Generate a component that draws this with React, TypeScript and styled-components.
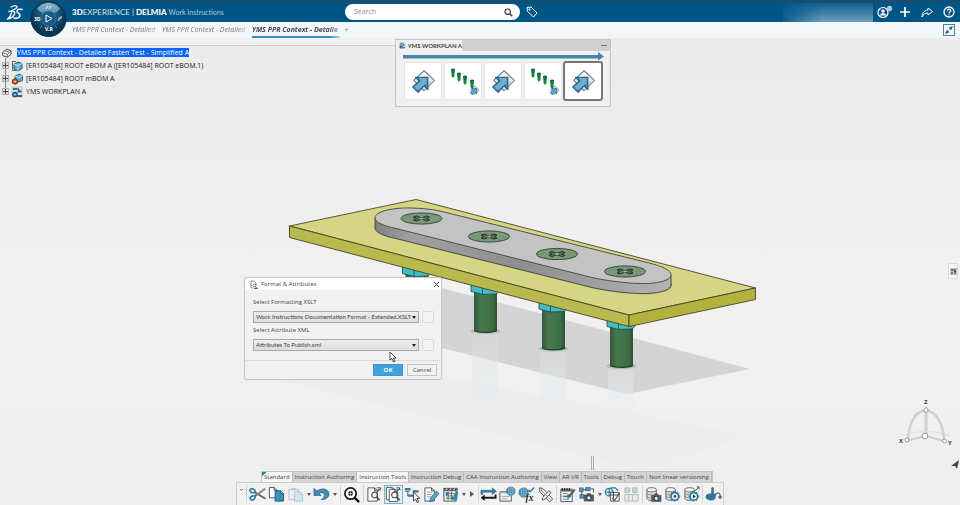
import React from 'react';
import styled, { createGlobalStyle, css } from 'styled-components';

const GlobalStyle = createGlobalStyle`
  * { box-sizing: border-box; }
  html, body, #root { height: 100%; }
  body {
    margin: 0;
    background: #eeeeee;
    color: #444;
    font-family: "Open Sans", "Noto Sans", sans-serif;
    font-size: 6px;
    line-height: 10px;
    overflow: hidden;
  }
  button, input, select { font: inherit; color: inherit; margin: 0; padding: 0; }
  svg { display: block; }
`;

const Page = styled.div`
  min-height: 100%;
  display: flex;
  flex-direction: column;
`;

/* ---------- top bar ---------- */

const TopBar = styled.header`
  position: relative;
  z-index: 2;
  height: 22px;
  display: grid;
  grid-template-columns: 345px minmax(0, 1fr) auto;
  align-items: center;
  background: #005587;
  border-top: 2px solid #1b4c69;
  color: #fff;
`;

const Brand = styled.div`
  display: flex;
  align-items: center;
  gap: 49px;
  padding-left: 6px;
`;

const BrandName = styled.h1`
  margin: 0;
  font-family: Lato, sans-serif;
  font-size: 8px;
  font-weight: 400;
  line-height: 14px;
  white-space: nowrap;
  color: #d5e6f0;
  b { font-weight: 900; color: #fff; }
  small { font-size: 7px; color: #a9cbe0; }
`;

const CompassButton = styled.button`
  position: absolute;
  left: 30px;
  top: -2px;
  width: 37px;
  height: 38px;
  border: 0;
  background: none;
`;

const SearchGroup = styled.form`
  display: flex;
  align-items: center;
  gap: 6px;
`;

const SearchField = styled.label`
  width: 175px;
  height: 16px;
  display: flex;
  align-items: center;
  padding: 0 7px 0 9px;
  border-radius: 8px;
  background: #fff;
  color: #333;
  input {
    flex: 1;
    min-width: 0;
    border: 0;
    outline: 0;
    background: none;
    font-size: 7px;
  }
  input::placeholder { color: #8d8d8d; }
`;

const TopActions = styled.div`
  display: flex;
  align-items: center;
`;

const UserName = styled.div`
  width: 90px;
  height: 19px;
  margin-right: 1px;
  background:
    linear-gradient(100deg, #07598a 0%, #07598a00 45%),
    linear-gradient(180deg, #155f8c 0%, #3d7ea6 50%, #6f9fbd 100%);
`;

const IconButton = styled.button<{ $w?: number }>`
  width: ${p => p.$w ?? 22}px;
  height: 18px;
  display: flex;
  align-items: center;
  justify-content: center;
  border: 0;
  background: none;
`;

/* ---------- document tabs ---------- */

const DocTabs = styled.nav`
  height: 16px;
  display: flex;
  align-items: stretch;
  padding: 0 5px 0 72px;
  background: #f4f7f9;
`;

const DocTab = styled.button<{ $active?: boolean }>`
  width: 86px;
  margin-right: 4px;
  border: 0;
  border-bottom: 2px solid transparent;
  background: none;
  font-size: 7px;
  font-style: italic;
  line-height: 13px;
  text-align: left;
  white-space: nowrap;
  overflow: hidden;
  color: #777;
  mask-image: linear-gradient(90deg, #000 88%, #0005);
  ${p => p.$active && css`
    width: 88px;
    font-weight: 700;
    color: #3f4a52;
    border-bottom-color: #3d8dc4;
  `}
`;

const AddTab = styled.button`
  border: 0;
  background: none;
  color: #999;
  font-size: 9px;
  line-height: 12px;
`;

const Collapse = styled.button`
  width: 12px;
  height: 12px;
  margin: 2px 0 0 auto;
  border: 1px solid #3e87ab;
  background: #eef5f9;
`;

/* ---------- workspace ---------- */

const Workspace = styled.main`
  position: relative;
  flex: 1;
  display: flex;
  flex-direction: column;
`;

const Scene = styled.svg`
  position: absolute;
  inset: 0;
  width: 100%;
  height: 100%;
`;

const TreeStrip = styled.div`
  position: relative;
  width: 396px;
  height: 8px;
  border-bottom: 1px solid #cfcfcf;
  background: #f0f1f2;
`;

const Tree = styled.ul`
  position: relative;
  align-self: flex-start;
  margin: 0;
  padding: 0 0 0 1px;
  list-style: none;
  font-size: 7px;
  color: #161616;
  &::before {
    content: "";
    position: absolute;
    left: 5px;
    top: 12px;
    bottom: 6px;
    border-left: 1px solid #888;
  }
`;

const TreeRow = styled.li<{ $root?: boolean }>`
  position: relative;
  height: 13px;
  display: flex;
  align-items: center;
  gap: ${p => (p.$root ? 5 : 1)}px;
  white-space: nowrap;
  mark { background: #0a63f5; color: #fff; line-height: 9px; }
  span { padding-left: 2px; }
`;

const Workplan = styled.section`
  position: absolute;
  left: 395px;
  top: 1px;
  width: 216px;
  border: 1px solid #c4c4c4;
  background: #f0f0f0;
`;

const WorkplanHead = styled.div`
  height: 11px;
  display: flex;
  justify-content: space-between;
  background: #d0d0d0;
`;

const WorkplanTitle = styled.h2`
  display: flex;
  align-items: center;
  gap: 2px;
  width: 66px;
  margin: 0;
  padding-left: 3px;
  background: #f0f0f0;
  font-family: Lato, sans-serif;
  font-size: 6px;
  font-weight: 700;
  white-space: nowrap;
`;

const Minimize = styled.button`
  width: 6px;
  height: 6px;
  margin-right: 3px;
  border: 0;
  border-bottom: 1px solid #777;
  background: none;
`;

const WorkplanArrow = styled.svg`
  width: 201px;
  height: 10px;
  margin: 0 7px 1px;
`;

const StepRow = styled.div`
  display: flex;
  gap: 2px;
  padding: 0 7px 6px 8px;
`;

const Step = styled.button<{ $active?: boolean }>`
  width: 38px;
  height: 38px;
  display: grid;
  place-items: center;
  border: 1px solid #e3e3e3;
  border-radius: 2px;
  background: #fff;
  ${p => p.$active && css`
    border-color: #777;
    box-shadow: 0 0 0 1px #777;
  `}
`;

/* ---------- dialog ---------- */

const Dialog = styled.section`
  position: absolute;
  left: 244px;
  top: 239px;
  width: 198px;
  border: 1px solid #c9c9c9;
  border-radius: 3px;
  background: #f1f1f1;
  box-shadow: 0 0 1px #bbb;
`;

const DialogHead = styled.div`
  height: 12px;
  display: flex;
  align-items: center;
  gap: 3px;
  padding: 0 1px 0 5px;
  border-radius: 3px 3px 0 0;
  background: #fff;
  h2 { flex: 1; margin: 0; font-size: 6px; font-weight: 400; }
`;

const DialogBody = styled.div`
  display: flex;
  flex-direction: column;
  padding: 6px 7px 8px 8px;
`;

const FieldLabel = styled.label`
  height: 14px;
  line-height: 12px;
`;

const FieldRow = styled.div`
  display: flex;
  align-items: center;
  gap: 3px;
  height: 14px;
`;

const SelectBox = styled.div`
  position: relative;
  flex: 1;
  select {
    width: 100%;
    height: 12px;
    padding: 0 0 0 2px;
    appearance: none;
    border: 1px solid #a9a9a9;
    border-radius: 0;
    background: linear-gradient(#eeeeee, #dedede);
    font-family: Lato, sans-serif;
    line-height: 10px;
  }
  svg { position: absolute; right: 3px; top: 5px; pointer-events: none; }
`;

const SmallBox = styled.button`
  width: 12px;
  height: 12px;
  border: 1px solid #d9d9d9;
  border-radius: 2px;
  background: #f4f4f4;
`;

const DialogFoot = styled.div`
  display: flex;
  justify-content: flex-end;
  gap: 4px;
  padding: 3px 4px 3px;
  border-top: 1px solid #dcdcdc;
`;

const DialogButton = styled.button<{ $primary?: boolean }>`
  width: 30px;
  height: 12px;
  border: 1px solid ${p => (p.$primary ? '#3696d4' : '#c6c6c6')};
  background: ${p => (p.$primary ? '#42a2da' : '#f3f3f3')};
  color: ${p => (p.$primary ? '#fff' : '#444')};
  font-weight: ${p => (p.$primary ? 700 : 400)};
`;

const Pointer = styled.svg`
  position: absolute;
  left: 389px;
  top: 313px;
`;

const SideHandle = styled.button`
  position: absolute;
  right: 2px;
  top: 225px;
  width: 10px;
  height: 16px;
  display: grid;
  place-items: center;
  border: 1px solid #dadada;
  background: #f7f7f7;
`;

/* ---------- action bar ---------- */

const ActionBar = styled.footer`
  position: relative;
  align-self: center;
  margin-top: auto;
  width: 488px;
`;

const SectionTabs = styled.div`
  display: flex;
  width: max-content;
  margin-left: 25px;
  border: 1px solid #c2c2c2;
  border-bottom: 0;
  background: #d3d3d3;
`;

const SectionTab = styled.button<{ $light?: boolean }>`
  height: 10px;
  padding: 0 2px;
  border: 0;
  border-right: 1px solid #bcbcbc;
  background: ${p => (p.$light ? '#f5f5f5' : 'transparent')};
  line-height: 10px;
  white-space: nowrap;
  &:first-child {
    background: linear-gradient(135deg, #2e7ea3 3px, #f5f5f5 3px);
  }
`;

const Tools = styled.div`
  display: flex;
  align-items: center;
  height: 23px;
  border: 1px solid #cccccc;
  border-bottom: 0;
  background: #f1f1f1;
`;

const Tool = styled.button<{ $on?: boolean; $faded?: boolean }>`
  flex: none;
  width: 19px;
  height: 19px;
  display: grid;
  place-items: center;
  border: 1px solid ${p => (p.$on ? '#7fb2d2' : 'transparent')};
  background: ${p => (p.$on ? '#e3eef5' : 'none')};
  opacity: ${p => (p.$faded ? 0.35 : 1)};
`;

const Caret = styled.button<{ $w: number }>`
  width: ${p => p.$w}px;
  height: 19px;
  display: grid;
  place-items: center;
  border: 0;
  background: none;
`;

const Separator = styled.i<{ $w: number }>`
  width: ${p => p.$w}px;
  height: 18px;
  background: linear-gradient(#d4d4d4, #d4d4d4) center / 1px 100% no-repeat;
`;

/* ---------- icon drawings, all on an 18 unit grid ---------- */

const BLUE = '#2e7ea3';
const DARK = '#4a5256';

type DocProps = { x?: number; y?: number; w?: number; h?: number; fill?: string; stroke?: string };

const Doc = ({ x = 2, y = 2, w = 9, h = 13, fill = '#fff', stroke = DARK }: DocProps) => (
  <path d={`M${x} ${y}h${w - 3}l3 3v${h - 3}h-${w}zM${x + w - 3} ${y}v3h3`} fill={fill} stroke={stroke} />
);
const Lens = ({ x = 10, y = 10, r = 3 }) => (
  <>
    <circle cx={x} cy={y} r={r} fill="#ffffffb0" stroke={DARK} strokeWidth="1.2" />
    <path d={`M${x + r - 1} ${y + r - 1}l3.5 3.5`} stroke={DARK} strokeWidth="1.8" />
  </>
);
const Globe = ({ x = 11, y = 6, r = 5 }) => (
  <>
    <circle cx={x} cy={y} r={r} fill={BLUE} stroke="#1e5876" strokeWidth=".6" />
    <path d={`M${x - r} ${y}h${2 * r}M${x} ${y - r}v${2 * r}M${x - r + 1} ${y - 2.4}h${2 * r - 2}M${x - r + 1} ${y + 2.4}h${2 * r - 2}`} stroke="#b7dbea" strokeWidth=".5" />
    <ellipse cx={x} cy={y} rx={r / 2} ry={r} stroke="#b7dbea" strokeWidth=".5" fill="none" />
  </>
);
const Database = () => (
  <>
    <path d="M2 4v9c0 3 10 3 10 0V4" fill="#dcdcdc" stroke="#666" />
    <ellipse cx="7" cy="4" rx="5" ry="2.2" fill="#f5f5f5" stroke="#666" />
    <path d="M2 7.5c0 2.6 10 2.6 10 0M2 10.5c0 2.6 10 2.6 10 0" stroke="#777" fill="none" strokeWidth=".8" />
  </>
);
const Camera = ({ x = 7, y = 9 }) => (
  <g transform={`translate(${x} ${y})`}>
    <path d="M0 1.5h2.5L3.5 0h3l1 1.5H10V8H0z" fill="#5a5e61" stroke="#3b3f41" strokeWidth=".6" />
    <circle cx="5" cy="4.6" r="2.3" fill="#e6eef2" stroke="#20282c" />
  </g>
);
const Gear = ({ x = 12, y = 11, r = 4 }) => (
  <>
    <circle cx={x} cy={y} r={r} fill="#eef6fa" stroke={BLUE} strokeWidth="1.8" />
    <circle cx={x} cy={y} r={r + 1.2} fill="none" stroke={BLUE} strokeWidth="1" strokeDasharray="1.8 2" />
  </>
);

const icons: Record<string, React.ReactNode> = {
  cut: (
    <>
      <path d="M17 3L6 10.5M17.5 13.5L6 6.5" stroke="#5c686e" strokeWidth="2" />
      <path d="M8 8.7l8.5-5.5" stroke="#c6d2d8" strokeWidth=".7" />
      <ellipse cx="3.6" cy="5" rx="2.7" ry="2" stroke={BLUE} strokeWidth="1.8" transform="rotate(25 3.6 5)" />
      <ellipse cx="3.8" cy="12.5" rx="2.7" ry="2" stroke={BLUE} strokeWidth="1.8" transform="rotate(-30 3.8 12.5)" />
    </>
  ),
  copy: (<><Doc x={1.5} y={1.5} w={8} h={11} /><Doc x={7.5} y={5} w={9} h={11} fill="#3a8fb7" stroke="#1e5f80" /></>),
  paste: (
    <g opacity=".55">
      <path d="M2 3.5h10v11H2z" fill="#e6e6e6" stroke="#999" /><path d="M5 2h4v2.5H5z" fill="#999" />
      <Doc x={8} y={6} w={8.5} h={10} fill="#bfe0ec" stroke="#6fa6bf" />
    </g>
  ),
  undo: (
    <path d="M1 2.5V10h7.500L6.500 7.800C9.500 6 12.500 7.800 12 10.500c-.4 1.700-1.700 3-3.500 4C13.500 14.500 17 12 17 8.500 17 3.500 10 1 4 5.300z" fill="#3d8db5" stroke="#1d5b7b" strokeWidth=".7" />
  ),
  zoom: (
    <>
      <circle cx="8" cy="8" r="6" fill="#fff" stroke="#15191b" strokeWidth="1.8" />
      <circle cx="8" cy="8" r="2.600" fill="#15191b" /><path d="M12.5 12.5l4.5 4.5" stroke="#15191b" strokeWidth="2.6" />
      <path d="M8 5.5v5M5.500 8h5" stroke="#fff" strokeWidth=".6" />
    </>
  ),
  docSearch: (<><Doc x={2} y={2} w={10} h={14} /><Lens x={9} y={9.5} /><path d="M12 6l4-4M11.5 2H16M12 4h4" stroke={DARK} /></>),
  docsSearch: (<><Doc x={1.5} y={1.5} w={9} h={13} /><Doc x={4.5} y={3.5} w={9} h={13} /><Lens x={10} y={9.5} /><path d="M12 6l4-4M12 2h4M12.5 4h4" stroke={DARK} /></>),
  flow: (
    <>
      <path d="M1 5.5h5M9 5.5h5M4 5.5v5h3" stroke={DARK} />
      <path d="M1 2h6v2.500H1zM9.500 4.500h6V7h-6zM4.500 9h5v2.500h-5z" fill={BLUE} />
      <path d="M10 6.5V16l2.3-2.2 1.7 3.7 1.5-.7-1.7-3.6H17z" fill="#fff" stroke="#22282b" strokeWidth=".9" />
    </>
  ),
  edit: (
    <>
      <Doc x={2} y={2} w={10} h={14} /><path d="M4 6.5h6M4 9h5M4 11.5h4" stroke="#777" strokeWidth=".8" />
      <path d="M8 12.5l6-7 3 2.5-6 7-4 1.500z" fill="#59a5c8" stroke="#2a6685" strokeWidth=".8" />
    </>
  ),
  clapper: (
    <>
      <path d="M2 5h13v11H2z" fill="#f1f1f1" stroke={DARK} /><path d="M1.5 2h15v3h-15z" fill="#555" />
      <path d="M4 4.5l1.5-2M8 4.5l1.5-2M12 4.5l1.5-2" stroke="#fff" />
      <path d="M4 8h9M4 10.5h9M4 13h9M6.5 6v9M10 6v9" stroke={DARK} strokeWidth=".8" />
      <path d="M4 6.5h3V10H4zM10 11h3v3.5h-3z" fill={BLUE} /><path d="M13 8l4-3-1 9-3 2z" fill={BLUE} />
    </>
  ),
  swap: (
    <>
      <path d="M1 4.5h12V2l4.5 3.5L13 9V6.5H3V9H1z" fill="#3286ad" stroke="#174f6b" strokeWidth=".5" />
      <path d="M17.5 13.5H5V16L.7 12.5 5 9v2.500h10.500V9h2z" fill="#161b1e" />
    </>
  ),
  globeDoc: (
    <>
      <path d="M1 6h12v10H1z" fill="#f8f8f8" stroke={DARK} /><path d="M1 6h12v2H1z" fill="#9bbccb" />
      <path d="M3 11h8M3 13.5h6" stroke="#888" strokeWidth=".8" /><Globe x={12.5} y={5.5} r={4.5} />
    </>
  ),
  globeFx: (
    <>
      <Globe x={6} y={7} r={5} /><path d="M11 4l2 2 4-4.5" stroke={BLUE} strokeWidth="1.5" />
      <text x="8" y="16" fontFamily="Liberation Serif, serif" fontStyle="italic" fontWeight="700" fontSize="10" fill="#1a1e20">fx</text>
    </>
  ),
  tag: (
    <>
      <path d="M2.5 2L6 2.5l10.500 11-3 3.5L3 6z" fill="#f5f5f5" stroke={DARK} strokeLinejoin="round" />
      <path d="M6 12l6.5-7L15 7l-6.5 7-3 1z" fill="#e2e6e8" stroke={DARK} strokeWidth=".9" />
      <path d="M5 5l9 9.5" stroke="#8a8f92" /><circle cx="5" cy="4.5" r=".8" fill={DARK} />
    </>
  ),
  notebook: (
    <>
      <path d="M2 3.5h12v13H2z" fill="#fff" stroke={DARK} /><path d="M2 3h12v3H2z" fill="#777" />
      <path d="M3.5 2v3M6 2v3M8.500 2v3M11 2v3" stroke="#222" strokeWidth="1.1" />
      <path d="M4 8h5M4 14h7" stroke="#777" /><path d="M4 10h5V8l4 3-4 3v-2H4z" fill={BLUE} /><path d="M10 10l6-7 1.5 1.500L12 11z" fill="#555" />
    </>
  ),
  camera: (
    <>
      <path d="M1.5 2h4v4h-4zM8 1.5h5V5H8zM2 9h4v4H2z" fill="#4a98bd" stroke="#23607e" strokeWidth=".7" />
      <path d="M5.5 4H8M4 6v3M14 3h2.5v4" stroke={DARK} /><Camera x={6.5} y={8} />
    </>
  ),
  shape: (
    <>
      <circle cx="5.5" cy="6.5" r="4" fill="#fff" stroke={BLUE} strokeWidth="1.5" />
      <path d="M7 2h5l3 3M2 6.5h7M5.5 2.5v8" stroke={BLUE} strokeWidth="1.3" />
      <path d="M7 7h9v9H7z" fill="#fff" stroke={DARK} /><path d="M7 9.5h9M10 7v9M8.5 12.5l3 2.5 5-8" stroke={DARK} strokeWidth="1.1" />
    </>
  ),
  board: (<><path d="M2 2h5v5H2zM10 2h5v5h-5z" fill="#69a6c2" stroke={DARK} /><path d="M2 9h14v7H2zM6 9v7M10 9v7" fill="#ddd" stroke={DARK} /></>),
  dbCamera: (<><Database /><Camera x={7} y={8.5} /></>),
  dbGear: (<><Database /><Gear x={11.5} y={11} /><circle cx="11.5" cy="11" r="1.5" fill={DARK} /></>),
  dbPlay: (<><Database /><Gear x={11.5} y={11} /><path d="M10.5 9l3 2-3 2z" fill="#222" /><path d="M13 5l4-4M14.5 1H17v2.500" stroke={DARK} /></>),
  hand: (
    <>
      <path d="M7 2.5v6C5 8 1 8.5 1 11.5 1 14 4 15 6.5 15c3 0 4.500-1 4.500-3.500V8.5H9v-6c0-1.300-2-1.300-2 0z" fill="#2f7599" stroke="#235f7d" strokeWidth=".6" />
      <path d="M11 10c.5-3.500 5-3.500 5 0v2M14 11l2 2 1.500-2" stroke={DARK} strokeWidth="1.2" />
    </>
  ),
};

const Icon = ({ name, size = 17 }: { name: string; size?: number }) => (
  <svg width={size} height={size} viewBox="0 0 18 18" fill="none" aria-hidden="true">{icons[name]}</svg>
);

const Down = ({ color = '#555' }) => (
  <svg width="4" height="3" viewBox="0 0 4 3" aria-hidden="true"><path d="M0 0h4L2 3z" fill={color} /></svg>
);

/* ---------- scene ---------- */

const SLOT = 'M375 218C375 211 394 207.500 411 208C421 208.300 430 209 440 211L645 262C662 266 671 270 671 275C671 281 655 284 640 283.500C626 283.200 608 281 592 277.500L396 228.500C384 226 375 222.500 375 218Z';

const Screw = ({ x, y }: { x: number; y: number }) => (
  <g transform={`translate(${x} ${y})`}>
    <ellipse rx="20.5" ry="5.6" fill="#7a977a" stroke="#2c442f" strokeWidth=".9" />
    <path d="M-8-1.500l3-1 4 1.500h2l4-1.500 3 1-3 1.500 3 1.500-3 1-4-1.500h-2l-4 1.500-3-1 3-1.500z" fill="#56745a" stroke="#1d2c20" strokeWidth=".9" />
    <ellipse rx="2" ry="1" fill="#a3b8a3" />
  </g>
);

const Bolt = ({ x, y }: { x: number; y: number }) => (
  <g transform={`translate(${x} ${y})`}>
    <ellipse cy="40" rx="15" ry="3" fill="#9a9a9a" opacity=".5" />
    <path d="M-11.500 0h23v39.500c-3 2.500-20 2.500-23 0z" fill="url(#bolt)" />
    <path d="M-11.500 39.500c3 2.500 20 2.500 23 0" stroke="#122b17" fill="none" />
    <path d="M-14.500-10V.5L-3 3.500l14-.5 3-4v-9z" fill="#43bcc2" stroke="#14474b" strokeWidth=".8" />
    <path d="M-3-6v9.500" stroke="#14474b" strokeWidth=".8" />
  </g>
);

const AxisTriad = () => (
  <g>
    <g fill="none" stroke="#cfcfcf" strokeLinecap="round">
      <path d="M908 439c2-38 33-38 36 0" strokeWidth="2.5" />
      <path d="M926 435v-23" strokeWidth="3" />
      <path d="M926 436l-17 4M926 436l18 5" strokeWidth="2" />
      <path d="M902 436c14-6 34-6 47 0" strokeWidth="1" stroke="#dedede" />
    </g>
    <g fill="#fff" stroke="#999">
      <circle cx="925" cy="436" r="2.8" /><circle cx="907" cy="440" r="2" /><circle cx="944.5" cy="441" r="2" /><path d="M926 407l2.500 4-2.500 1.500-2.500-1.500z" />
    </g>
    <g fontFamily="Noto Sans, sans-serif" fontWeight="700" fontSize="6" fill="#444">
      <text x="924" y="404">Z</text><text x="899" y="443">X</text><text x="948" y="445">Y</text>
    </g>
    <path d="M951 466l8-6-2 9-2-3z" fill="#444" />
  </g>
);

const Model = () => (
  <Scene viewBox="0 38 960 467" preserveAspectRatio="xMidYMid slice" role="img" aria-label="Plate assembly">
    <defs>
      <linearGradient id="bolt"><stop offset="0" stopColor="#35593b" /><stop offset=".3" stopColor="#457a4d" /><stop offset=".8" stopColor="#3e6d46" /><stop offset="1" stopColor="#2d5034" /></linearGradient>
      <linearGradient id="side"><stop offset="0" stopColor="#808080" /><stop offset=".12" stopColor="#a0a0a0" /><stop offset=".5" stopColor="#8e8e8e" /><stop offset=".8" stopColor="#a4a4a4" /><stop offset="1" stopColor="#b4b4b4" /></linearGradient>
      <linearGradient id="floor" x2="0" y2="1"><stop offset="0" stopColor="#ebebeb" /><stop offset=".6" stopColor="#f1f1f1" /><stop offset="1" stopColor="#eeeeee" /></linearGradient>
      <linearGradient id="fade" x2="0" y2="1"><stop offset="0" stopColor="#dcdcdc" stopOpacity=".3" /><stop offset=".6" stopColor="#e6ebee" stopOpacity=".5" /><stop offset="1" stopColor="#eee" stopOpacity="0" /></linearGradient>
    </defs>
    <path d="M0 38h960v467H0z" fill="url(#floor)" />
    <path d="M282 380L440 376 750 436 640 470z" fill="#ededed" />
    <path d="M430 285L520 308 750 369 627 394 430 345z" fill="#d4d4d4" />
    <path d="M608 370h26v68h-26zM540 352h26v66h-26zM472 335h26v66h-26z" fill="url(#fade)" />
    <Bolt x={417} y={273} /><Bolt x={485.5} y={291} /><Bolt x={553.5} y={308.5} /><Bolt x={621.5} y={326} />
    <g stroke="#46462a" strokeWidth=".9" strokeLinejoin="round">
      <path d="M289.500 226L416 199.500 755.500 288 629 315z" fill="#d5d585" />
      <path d="M289.500 226L629 315v11.500L289.500 237.500z" fill="#b9b94d" />
      <path d="M629 315l126.500-27v11.500L629 326.500z" fill="#b3b23c" />
    </g>
    <g transform="translate(1 11)"><path d={SLOT} fill="#9b9b63" opacity=".5" /></g>
    <g stroke="#444" strokeWidth=".9">
      <g transform="translate(0 10)"><path d={SLOT} fill="url(#side)" /></g>
      <path d="M375 218v10l21 10 276 46-1-9z" fill="url(#side)" stroke="none" />
      <path d="M375 218v10M671 275v10" />
      <path d={SLOT} fill="#c3c3c3" />
    </g>
    <Screw x={421.5} y={218.5} /><Screw x={489} y={236.5} /><Screw x={557} y={254} /><Screw x={625} y={271.5} />
    <path d="M591.500 456v14M593.500 456v14" stroke="#999" strokeWidth=".8" />
    <AxisTriad />
  </Scene>
);

const ArrowTile = ({ size = 26 }) => (
  <svg width={size} height={size} viewBox="0 0 24 24" fill="none" aria-hidden="true">
    <path d="M13 2.500l9.500 9L13 21l-9.500-9.500z" fill="#f1f2f3" stroke="#6a7075" strokeLinejoin="round" />
    <path d="M13 12l9-.5L13 21z" fill="#d5d9dc" />
    <path d="M5 8.500h11.500v11.500l-3.500-3.500-5.500 6-5-5 6-5.500z" fill="#4590bb" stroke="#235b7e" strokeLinejoin="round" />
    <path d="M8 9.500h7.500v4L7 20.500l-3-3 6.500-5.500z" fill="#8cc2df" opacity=".6" />
  </svg>
);

const FastenTile = () => (
  <svg width="34" height="32" viewBox="0 0 34 32" fill="none" aria-hidden="true">
    {[[7, 5], [13, 9], [19, 12], [26, 16]].map(([x, y]) => (
      <g key={x}>
        <ellipse cx={x} cy={y} rx="2.2" ry="1.5" fill="#07622b" /><path d={`M${x - 1.5} ${y}h3v6l-1.5 2-1.5-2z`} fill="#128a3d" />
        <path d={`M${x - 1.5} ${y + 2}h3`} stroke="#154776" strokeWidth="1.2" />
      </g>
    ))}
    <g transform="translate(23 20) scale(.45)">
      <path d="M13 2.500l9.500 9L13 21l-9.500-9.500z" fill="#f1f2f3" stroke="#555b60" strokeWidth="1.5" />
      <path d="M6 8h11v11l-3.500-3-6 6-5-5 6-6z" fill="#5ba5ce" stroke="#235b7e" strokeWidth="1.5" />
    </g>
  </svg>
);

const Expander = () => (
  <svg width="9" height="9" viewBox="0 0 9 9" aria-hidden="true"><path d="M1.500 1.500h6v6h-6z" fill="#e0e0e0" stroke="#aaa" /><path d="M2 4.500h5M4.500 2v5" stroke="#444" /></svg>
);

const treeIcons: Record<string, React.ReactNode> = {
  root: (<><path d="M1.500 6L6 2.500l5 1.500v4L7 11 2 9.500z" fill="#f3f3f3" stroke="#444" /><path d="M2 6.500L7 8l4-3.500M7 8v3M4 4l4.500 1.500" stroke="#555" strokeWidth=".8" /></>),
  ebom: (<><path d="M1 1h4v1H2v8h3v1H1z" fill="#666" /><path d="M3 4l4-2 4 1.500v5L7 11 3 9z" fill="#5aabd0" stroke="#1d5673" /><path d="M3 4l4 1.500 4-2M7 5.500V11" stroke="#d8f1fa" strokeWidth=".8" /></>),
  mbom: (<><path d="M4 3l4-2 3.500 1.500v5L8 9 4 8z" fill="#5aabd0" stroke="#1d5673" strokeWidth=".8" /><path d="M4 3l4 1.500 3.500-2" stroke="#d8f1fa" /><circle cx="4" cy="8.5" r="2.7" fill="#c96122" stroke="#773000" /><circle cx="4" cy="8.5" r=".8" fill="#fff" /></>),
  plan: (<><path d="M1 1h10v10H1z" fill="#dce8ef" stroke="#95a5ae" strokeWidth=".6" /><path d="M2 2h4v2H2zM6.500 4.500h4v2h-4zM6 9h5v2H6z" fill="#2a6e95" /><path d="M6 3h2v2" stroke="#333" fill="none" /><circle cx="4" cy="8.5" r="2.4" fill="#2b82b3" stroke="#124766" /><circle cx="4" cy="8.5" r=".7" fill="#fff" /></>),
};
const TreeIcon = ({ name, size = 12 }: { name: string; size?: number }) => (
  <svg width={size} height={size} viewBox="0 0 12 12" fill="none" aria-hidden="true">{treeIcons[name]}</svg>
);

const nodes = [
  { icon: 'ebom', text: '[ER105484] ROOT eBOM A ([ER105484] ROOT eBOM.1)' },
  { icon: 'mbom', text: '[ER105484] ROOT mBOM A' },
  { icon: 'plan', text: 'YMS WORKPLAN A' },
];

const sections = ['Standard', 'Instruction Authoring', 'Instruction Tools', 'Instruction Debug', 'CAA Instruction Authoring', 'View', 'AR-VR', 'Tools', 'Debug', 'Touch', 'Non linear versioning'];

/* Strings name a tool; "v" is a menu caret, ">" an overflow arrow, a number a divider of that width. */
const toolRow: (string | number)[] = [
  'cut', 'copy', 'paste', 'v', 'undo', 'v', 4, 'zoom', 4, 'docSearch', 'docsSearch', 'flow', 'edit', 'clapper', 'v', '>', 2,
  'swap', 'globeDoc', 'globeFx', 'tag', 3, 'notebook', 'camera', 'v', 'shape', 'board', 3, 'dbCamera', 'dbGear', 'dbPlay', 3, 'hand',
];

const Toolbar = () => (
  <ActionBar>
    <SectionTabs role="tablist">
      {sections.map(s => (
        <SectionTab key={s} role="tab" $light={s === 'Instruction Tools'}>{s}</SectionTab>
      ))}
    </SectionTabs>
    <Tools>
      <Caret $w={8} aria-label="Collapse"><svg width="5" height="14" viewBox="0 0 5 14"><path d="M1 2l1.500 1.500L4 2" stroke="#555" fill="none" strokeWidth=".8" /></svg></Caret>
      <Separator $w={3} />
      {toolRow.map((t, i) => {
        if (typeof t === 'number') return <Separator key={i} $w={t} />;
        if (t === 'v') return <Caret key={i} $w={7} aria-label="More"><Down /></Caret>;
        if (t === '>') return <Caret key={i} $w={10} aria-label="Next"><svg width="4" height="6" viewBox="0 0 4 6"><path d="M0 0l4 3-4 3z" fill="#555" /></svg></Caret>;
        return <Tool key={i} aria-label={t} $on={t === 'docsSearch'} $faded={t === 'board'}><Icon name={t} /></Tool>;
      })}
    </Tools>
  </ActionBar>
);

const FormatDialog = () => (
  <Dialog role="dialog" aria-labelledby="format-title">
    <DialogHead>
      <svg width="8" height="9" viewBox="0 0 8 9" fill="none"><path d="M1 1h3l2 2v2M1 1v7h2" stroke="#777" strokeWidth=".8" /><circle cx="4.5" cy="5.5" r="1.5" stroke="#555" strokeWidth=".8" /><path d="M5.500 7l2 1.500H4" stroke="#555" /></svg>
      <h2 id="format-title">Format &amp; Attributes</h2>
      <IconButton $w={8} aria-label="Close"><svg width="5" height="5" viewBox="0 0 5 5"><path d="M0 0l5 5M5 0L0 5" stroke="#444" /></svg></IconButton>
    </DialogHead>
    <DialogBody>
      <FieldLabel htmlFor="xslt">Select Formatting XSLT</FieldLabel>
      <FieldRow>
        <SelectBox><select id="xslt"><option>Work Instructions Documentation Format - Extended.XSLT</option></select><Down color="#222" /></SelectBox>
        <SmallBox aria-label="Browse XSLT" />
      </FieldRow>
      <FieldLabel htmlFor="xml">Select Attribute XML</FieldLabel>
      <FieldRow>
        <SelectBox><select id="xml"><option>Attributes To Publish.xml</option></select><Down color="#222" /></SelectBox>
        <SmallBox aria-label="Browse XML" />
      </FieldRow>
    </DialogBody>
    <DialogFoot>
      <DialogButton $primary>OK</DialogButton>
      <DialogButton>Cancel</DialogButton>
    </DialogFoot>
  </Dialog>
);

const WorkplanPanel = () => (
  <Workplan>
    <WorkplanHead>
      <WorkplanTitle><TreeIcon name="plan" size={7} />YMS WORKPLAN A</WorkplanTitle>
      <Minimize aria-label="Minimize" />
    </WorkplanHead>
    <WorkplanArrow viewBox="0 0 201 10"><path d="M0 4h195V1l6 4.500-6 4V7.500H0z" fill="#4685a4" /></WorkplanArrow>
    <StepRow>
      {[0, 1, 2, 3, 4].map(i => (
        <Step key={i} $active={i === 4} aria-label={`Step ${i + 1}`}>{i % 2 ? <FastenTile /> : <ArrowTile />}</Step>
      ))}
    </StepRow>
  </Workplan>
);

const Compass = () => (
  <CompassButton aria-label="Compass">
    <svg width="37" height="38" viewBox="0 0 37 38">
      <defs>
        <radialGradient id="dial" cy=".35"><stop offset="0" stopColor="#2c7299" /><stop offset=".7" stopColor="#0f4c72" /><stop offset="1" stopColor="#0a3553" /></radialGradient>
        <linearGradient id="gloss" x2="0" y2="1"><stop offset="0" stopColor="#b5cfde" /><stop offset="1" stopColor="#4883a5" /></linearGradient>
      </defs>
      <circle cx="18.5" cy="19" r="17.5" fill="url(#dial)" stroke="#09304b" />
      <path d="M18.500 18L7 9c5-8 18-8 23 0z" fill="url(#gloss)" opacity=".8" />
      <circle cx="18.5" cy="18.5" r="7.5" fill="#195b83" stroke="#3e7da1" strokeWidth=".6" />
      <path d="M16 15l6 3.500-6 3.500z" fill="none" stroke="#fff" />
      <path d="M10 28l2-2M27 28l-2-2M9 10l2 2M28 10l-2 2" stroke="#7caac3" strokeWidth=".8" />
      <g fill="#fff" fontFamily="Noto Sans, sans-serif" fontWeight="700" fontSize="5"><text x="4" y="21">3D</text><text x="28" y="21" fontStyle="italic">i²</text><text x="15" y="31">V.R</text></g>
      <path d="M16 9l2-3M19 9l2-3" stroke="#fff" strokeWidth=".9" />
    </svg>
  </CompassButton>
);

export default function App() {
  return (
    <Page>
      <GlobalStyle />
      <TopBar>
        <Brand>
          <svg width="17" height="17" viewBox="0 0 17 17" fill="none" stroke="#fff" strokeLinecap="round" strokeLinejoin="round" aria-label="Logo">
            <path d="M5 3C8 1.500 11 1 11 3c0 1.500-3 2.500-5 3.500" strokeWidth="1.2" />
            <path d="M3 7.500c4-1 6.500 0 5.500 2.500C7.500 13 4 14.500 1.500 15c2-1.500 3.500-3.500 4-6" strokeWidth="1.3" />
            <path d="M16 5.500c-3-.8-5.500.2-5 2 .5 1.500 3.500 2.500 3 4.500-.5 2-4 2.500-6 2" strokeWidth="1.5" />
          </svg>
          <BrandName><b>3D</b>EXPERIENCE | <b>DELMIA</b> <small>Work Instructions</small></BrandName>
        </Brand>
        <Compass />
        <SearchGroup onSubmit={e => e.preventDefault()}>
          <SearchField>
            <input type="search" placeholder="Search" aria-label="Search" />
            <svg width="9" height="9" viewBox="0 0 9 9" fill="none" stroke="#333"><circle cx="3.7" cy="3.7" r="2.7" strokeWidth="1.1" /><path d="M5.800 5.800l2.500 2.500" strokeWidth="1.5" /></svg>
          </SearchField>
          <IconButton type="button" $w={12} aria-label="Tags"><svg width="12" height="12" viewBox="0 0 12 12" fill="none" stroke="#fff"><path d="M1 1.500L5 1l6 6-3.500 4L1.500 5.500z" strokeLinejoin="round" /><circle cx="3.5" cy="3.5" r=".7" /></svg></IconButton>
        </SearchGroup>
        <TopActions>
          <UserName />
          <IconButton $w={20} aria-label="Profile"><svg width="17" height="14" viewBox="0 0 17 14" fill="none"><circle cx="7" cy="7.5" r="5" stroke="#fff" strokeWidth="1.2" /><circle cx="7" cy="6" r="1.7" fill="#fff" /><path d="M4 10.500c0-3.500 6-3.500 6 0z" fill="#fff" /><circle cx="13.5" cy="3.5" r="2.7" fill="#c4c2cb" /></svg></IconButton>
          <IconButton aria-label="Add"><svg width="10" height="10" viewBox="0 0 10 10"><path d="M5 0v10M0 5h10" stroke="#fff" strokeWidth="1.7" /></svg></IconButton>
          <IconButton aria-label="Share"><svg width="12" height="11" viewBox="0 0 12 11" fill="none" stroke="#fff"><path d="M7 1l4.500 3.500L7 8V6C4 6 2.500 7 1 10c0-4 2-6.500 6-7z" strokeLinejoin="round" /></svg></IconButton>
          <IconButton aria-label="Help"><svg width="12" height="12" viewBox="0 0 12 12" fill="none" stroke="#fff"><circle cx="6" cy="6" r="5" strokeWidth="1.3" /><path d="M4.300 4.700c.2-2 3.400-2 3.400 0C7.700 6 6 6 6 7.300M6 8.300v1" strokeWidth="1.3" /></svg></IconButton>
        </TopActions>
      </TopBar>
      <DocTabs>
        <DocTab>YMS PPR Context - Detailed</DocTab>
        <DocTab>YMS PPR Context - Detailed</DocTab>
        <DocTab $active>YMS PPR Context - Detaile</DocTab>
        <AddTab aria-label="New tab">+</AddTab>
        <Collapse aria-label="Exit full view"><svg width="10" height="10" viewBox="0 0 10 10"><path d="M8.500 1.500L6 4M6 2v2h2M1.500 8.500L4 6M2 6h2v2" stroke="#1c516f" fill="none" strokeWidth="1.2" /></svg></Collapse>
      </DocTabs>
      <Workspace>
        <Model />
        <TreeStrip />
        <Tree>
          <TreeRow $root><TreeIcon name="root" size={11} /><mark>YMS PPR Context - Detailed Fasten Test - Simplified A</mark></TreeRow>
          {nodes.map(n => (
            <TreeRow key={n.icon}><Expander /><TreeIcon name={n.icon} /><span>{n.text}</span></TreeRow>
          ))}
        </Tree>
        <WorkplanPanel />
        <FormatDialog />
        <Pointer width="8" height="12" viewBox="0 0 8 12"><path d="M1 1v8l2-1.500L4.500 11 6 10.300 4.500 7H7z" fill="#fff" stroke="#222" strokeWidth=".8" /></Pointer>
        <SideHandle aria-label="Open side panel"><svg width="7" height="7" viewBox="0 0 7 7"><path d="M0 0h7v7H0z" fill="#bbb" /><path d="M1 2h3M1 5h2M4 3.500h2M5 1v5" stroke="#444" /></svg></SideHandle>
        <Toolbar />
      </Workspace>
    </Page>
  );
}
